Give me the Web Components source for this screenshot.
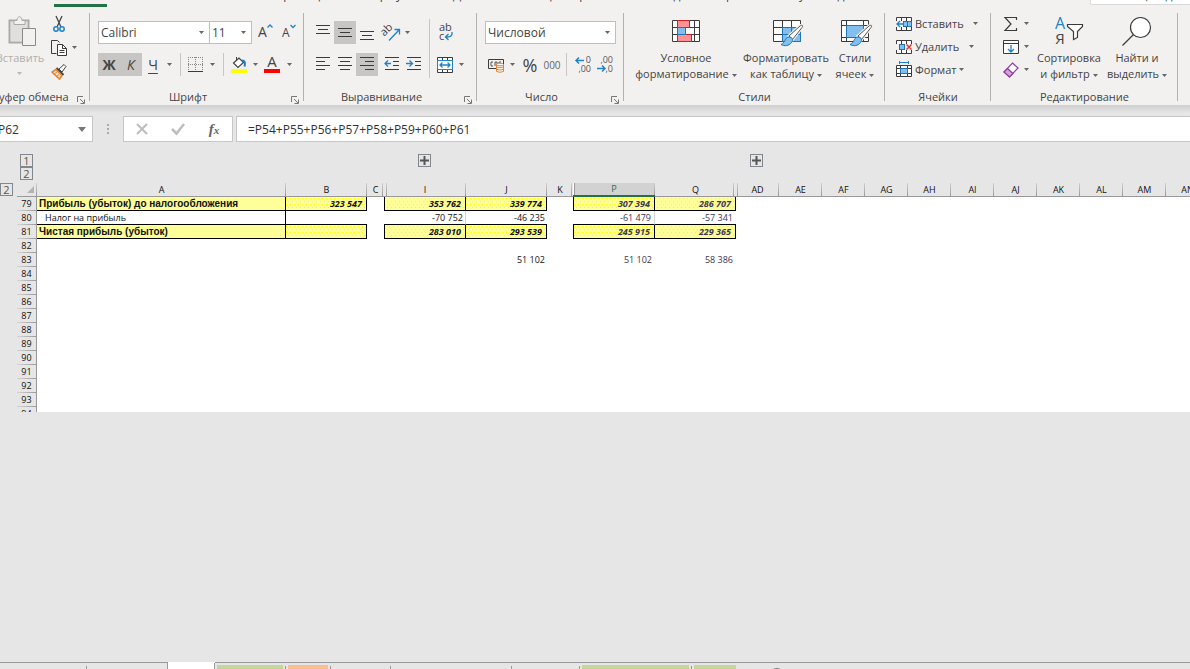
<!DOCTYPE html>
<html lang="ru">
<head>
<meta charset="utf-8">
<title>Книга</title>
<style>
html,body{margin:0;height:100%}
body{background:#e6e6e6;color:#444;font:12px/16px "Open Sans","Noto Sans",sans-serif;overflow:hidden}
</style>
</head>
<body>
<excel-app></excel-app>
<script>
const K='#3b3b3b', B='#1e83c8';
const lines=(...a)=>`<path d="${a.map(([x,y,w])=>`M${x} ${y}.5h${w}`).join('')}" stroke="${K}"/>`;
const brush=`<path d="M31 11.500c1.500-2 0-3-2-1.500L18 20l3.500 3.500z" fill="#fff" stroke="#f3f1f0" stroke-width="3"/><path d="M31 11.500c1.500-2 0-3-2-1.500L18 20l3.500 3.500z" fill="#fff" stroke="#555"/><path d="M10 28.500c4-1 3.500-7 8-7.500 3.500 0 4.500 3 2.500 5.500-2.500 3.500-7 4-10.500 2z" fill="#83beec" stroke="#1e74b8"/>`;
const ICONS={
 paste:[30,30,`<path d="M4.500 4.500h19v22h-19z" fill="none" stroke="#a9a9a9" stroke-width="2"/><path d="M6 6h16v19H6z" fill="#e1dfdd"/><path d="M9 8.500V4.500h3c0-5 5-5 5 0h3v4z" fill="#f3f1f0" stroke="#a9a9a9"/><path d="M17.500 12.500h13v17h-13z" fill="#f3f1f0" stroke="#8a8a8a"/>`],
 cut:[16,16,`<path d="M5 0l5 11M11 0L6 11" stroke="#444" stroke-width="1.300"/><circle cx="5" cy="13" r="2.200" fill="none" stroke="${B}" stroke-width="1.500"/><circle cx="11" cy="13" r="2.200" fill="none" stroke="${B}" stroke-width="1.500"/>`],
 copy:[16,16,`<path d="M5.500 13.500h-5V.5h6l2 2" fill="none" stroke="${K}"/><path d="M6.500 4.500h5l4 4v7h-9z" fill="#fff" stroke="${K}"/><path d="M11.500 4.500v4h4M8.500 10.500h5M8.500 12.500h5" fill="none" stroke="${K}"/>`],
 painter:[16,16,`<path d="M8 5l5-4.500 2 2L11 8z" fill="#fff" stroke="#444"/><path d="M5.500 4l7 7" stroke="#444" stroke-width="2"/><path d="M5 5.500L1 8l7.500 7L11 11.500z" fill="#fbe3cf" stroke="#e8812c" stroke-width="1.500"/><path d="M3 10l3-2M5.500 12.500l3-2.500" stroke="#e8812c"/>`],
 grow:[16,16,`<text x="0" y="12" font-size="14" fill="#444">A</text><path d="M9.500 2.500L12 0l2.500 2.500" fill="none" stroke="${B}" stroke-width="1.300"/>`],
 shrink:[16,16,`<text x="1" y="12" font-size="12" fill="#444">A</text><path d="M9.500 0L12 2.500 14.500 0" fill="none" stroke="${B}" stroke-width="1.300"/>`],
 borders:[16,16,`<path d="M.5 0v13M5 .5M0 .5h15M14.500 0v13M7.500 0v13M0 7.500h15" stroke="#888" stroke-dasharray="1 1" fill="none"/><path d="M0 14.500h15" stroke="${K}" stroke-width="1"/>`],
 fill:[16,16,`<path d="M8 1L2.500 6 7 10.500l5.500-5z" fill="#fff" stroke="#444" stroke-width="1.200"/><path d="M5.500 4V0" stroke="#444"/><path d="M11 3.500c3 0 3.500 2 2.500 6" fill="none" stroke="${B}" stroke-width="2"/><path d="M0 12h16v4H0z" fill="#ff0"/>`],
 fcolor:[16,16,`<text x="8" y="10" font-size="15" fill="#444" text-anchor="middle">A</text><path d="M0 12h16v4H0z" fill="#f00"/>`],
 top:[14,16,lines([0,0,14],[2,4,10],[0,8,14])],
 mid:[14,16,lines([0,3,14],[2,7,10],[0,11,14])],
 bot:[14,16,lines([0,6,14],[2,10,10],[0,14,14])],
 left:[14,16,lines([0,0,14],[0,4,9],[0,8,14],[0,12,9])],
 center:[14,16,lines([0,0,14],[2,4,10],[0,8,14],[2,12,10])],
 right:[14,16,lines([0,0,14],[5,4,9],[0,8,14],[5,12,9])],
 outdent:[16,16,lines([1,0,14],[9,4,6],[9,8,6],[1,12,14])+`<path d="M1 6.500h6M4 3.500l-3 3 3 3" fill="none" stroke="${B}" stroke-width="1.300"/>`],
 indent:[16,16,lines([1,0,14],[9,4,6],[9,8,6],[1,12,14])+`<path d="M0 6.500h6M3.500 3.500l3 3-3 3" fill="none" stroke="${B}" stroke-width="1.300"/>`],
 orient:[16,16,`<text x="-1" y="9" font-size="11" fill="#444" transform="rotate(-45 3 9)">ab</text><path d="M5 15.500L15 5M10.500 4.500H15.500V9.500" fill="none" stroke="${B}" stroke-width="1.300"/>`],
 wrap:[16,18,`<text x="2" y="7" font-size="11" fill="#444">ab</text><text x="2" y="16" font-size="11" fill="#444">c</text><path d="M15 8v2q0 3-6 3M11.500 10l-3 3 3 3" fill="none" stroke="${B}" stroke-width="1.300"/>`],
 merge:[16,16,`<path d="M.5.5h15v15H.5zM5.500.5v3M10.500.5v3M5.500 12.500v3M10.500 12.500v3" fill="#fff" stroke="${K}"/><path d="M.5 3.500h15v9H.5z" fill="#fff" stroke="${B}"/><path d="M3 8h10M5.500 5.500L3 8l2.500 2.500M10.500 5.500L13 8l-2.500 2.500" fill="none" stroke="${B}" stroke-width="1.300"/>`],
 money:[17,16,`<path d="M.5 2.500h15v9H.5z" fill="none" stroke="${K}"/><path d="M5 5H3v4h2M9 9V5H7v4M11 9V5h2" fill="none" stroke="#555"/><path d="M8.500 7.500h7v7q-3.500 1.500-7 0z" fill="#fff" stroke="#e8812c"/><ellipse cx="12" cy="7.500" rx="3.500" ry="1.300" fill="#fff" stroke="#e8812c"/><path d="M8.500 10q3.500 1.500 7 0M8.500 12.300q3.500 1.500 7 0" fill="none" stroke="#e8812c"/>`],
 decinc:[17,18,`<text x="16" y="7" font-size="9" text-anchor="end" fill="#555">0</text><text x="16" y="16" font-size="9" text-anchor="end" fill="#555">,00</text><path d="M1 4.500h8M4 1.500l-3 3 3 3" fill="none" stroke="${B}" stroke-width="1.500"/>`],
 decdec:[17,18,`<text x="16" y="7" font-size="9" text-anchor="end" fill="#555">,00</text><text x="16" y="16" font-size="9" text-anchor="end" fill="#555">,0</text><path d="M0 12.500h8M5 9.500l3 3-3 3" fill="none" stroke="${B}" stroke-width="1.500"/>`],
 cond:[30,30,`<path d="M1.500 4.500h27v21h-27zM1.500 11.500h27M1.500 18.500h27M6.500 4.500v21M14.500 4.500v21M23.500 4.500v21" fill="#fff" stroke="${K}"/><path d="M6.500 4.500h12v7h-12zM6.500 18.500h14v7h-14z" fill="#ff9298" stroke="#d01f1f"/><path d="M6.500 11.500h8v7h-8z" fill="#83beec" stroke="#1e74b8"/>`],
 table:[30,30,`<path d="M2.500 4.500h27v21h-27z" fill="#fff" stroke="${K}"/><path d="M11.500 11.500h18v14h-18z" fill="#83beec"/><path d="M2.500 11.500h9M2.500 18.500h9M11.500 4.500v7M20.500 4.500v7" stroke="${K}"/><path d="M11.500 11.500h18v14h-18zM11.500 18.500h18M20.500 11.500v14" stroke="#1e74b8" fill="none"/>`+brush],
 styles:[30,30,`<path d="M1.500 4.500h27v21h-27zM1.500 9.500h27M1.500 21.500h27M6.500 4.500v21M23.500 4.500v21" fill="#fff" stroke="${K}"/><path d="M6.500 9.500h17v12h-17z" fill="#83beec" stroke="#1e74b8"/>`+brush],
 insert:[16,16,`<path d="M.5 1.500h15v13H.5zM.5 5.500h15M.5 10.500h15M5.500 1.500v13M10.500 1.500v13" fill="#fff" stroke="${K}"/><path d="M0 5h7v6H0z" fill="#f3f1f0"/><path d="M7.500 5.500h8v5h-8zM11.500 5.500v5" fill="#83beec" stroke="#1e74b8"/><path d="M1 8h7M4 5L1 8l3 3" fill="none" stroke="${B}" stroke-width="1.300"/>`],
 del:[16,16,`<path d="M.5 1.500h15v13H.5zM.5 5.500h15M.5 10.500h15M5.500 1.500v13M10.500 1.500v13" fill="#fff" stroke="${K}"/><path d="M0 5h3v6H0zM9 5h7v6H9z" fill="#f3f1f0"/><path d="M3.500 5.500h5v5h-5z" fill="#83beec" stroke="#1e74b8"/><path d="M10.500 5.500l5 5M15.500 5.500l-5 5" stroke="#e8383d" stroke-width="1.500"/>`],
 format:[16,16,`<path d="M.5 3.500h15v11H.5zM.5 6.500h15M.5 11.500h15M4.500 3.500v11M11.500 3.500v11" fill="#fff" stroke="${K}"/><path d="M4.500 6.500h7v5h-7z" fill="#83beec" stroke="#1e74b8"/><path d="M3.500-1v3M12.500-1v3M3.500.5h9" stroke="${B}"/>`],
 sum:[16,16,`<path d="M13.500 4V1.500H2L8 8l-6 6.500h11.500V12" fill="none" stroke="${K}" stroke-width="1.200"/>`],
 down:[16,16,`<path d="M.5 1.500h15v13H.5zM.5 4.500h15" fill="#fff" stroke="${K}"/><path d="M8 6v7M5 10l3 3 3-3" fill="none" stroke="${B}" stroke-width="1.300"/>`],
 eraser:[16,16,`<path d="M9.500 1L15 6 6.500 15 1 10z" fill="#fff" stroke="#8b3fa0" stroke-width="1.200"/><path d="M4.500 6.500L10 11.500 6.500 15 1 10z" fill="#d8a0df" stroke="#8b3fa0" stroke-width="1.200"/>`],
 sort:[30,30,`<text x="6" y="13" font-size="16" text-anchor="middle" fill="${B}">A</text><text x="6" y="28" font-size="15" text-anchor="middle" fill="#444">Я</text><path d="M13.500 8.500h15v2l-5 5v6l-4 2v-8l-6-5z" fill="#fff" stroke="${K}" stroke-width="1.200"/>`],
 find:[30,30,`<circle cx="18.500" cy="11.500" r="10" fill="#fff" stroke="${K}" stroke-width="1.200"/><path d="M11.500 18.500L.5 29.500" stroke="${K}" stroke-width="1.300"/>`],
 launch:[8,8,`<path d="M.5 6V.5H6M3 3l4 4M7.500 3.500v4h-4" fill="none" stroke="#777"/>`],
 caret:[5,3,`<path d="M0 0h5L2.500 3z" fill="#666"/>`],
 cancel:[12,12,`<path d="M1 1l10 10M11 1L1 11" stroke="#bdbdbd" stroke-width="2"/>`],
 ok:[14,12,`<path d="M1 6l4.500 4.500L13 1" fill="none" stroke="#bdbdbd" stroke-width="2.500"/>`]
};
const svg=n=>{const[w,h,b]=ICONS[n];return `<svg width="${w}" height="${h}" viewBox="0 0 ${w} ${h}" fill="none" aria-hidden="true">${b}</svg>`};
const define=(tag,render)=>customElements.define(tag,class extends HTMLElement{
  constructor(){super();this.attachShadow({mode:'open'})}
  connectedCallback(){this.shadowRoot.innerHTML=render(this)}
});
const BTN='button{font:inherit;color:inherit;background:none;border:0;padding:0;margin:0}svg{display:block;flex:none;overflow:visible}';

define('rb-group',e=>`<style>${BTN}
:host{display:flex;flex-direction:column;flex:none;box-sizing:border-box;background:linear-gradient(#b4b2b1,#b4b2b1) right 1px/1px 88px no-repeat}
.body{display:flex;height:77px}
.foot{display:flex;height:16px;line-height:16px}
.foot span{flex:1;text-align:center;white-space:nowrap}
.foot button{width:18px;padding:5px 0 0 5px}
</style><div class="body"><slot></slot></div><div class="foot"><span>${e.getAttribute('label')}</span>${e.hasAttribute('launcher')?`<button title="Параметры">${svg('launch')}</button>`:''}</div>`);

define('rb-rows',()=>`<style>:host{display:flex;flex-direction:column;gap:9px;padding-top:9px}:host([three]){gap:0;padding-top:0}</style><slot></slot>`);
define('rb-row',()=>`<style>:host{display:flex;height:23px;align-items:stretch}</style><slot></slot>`);
define('rb-sep',()=>`<style>:host{display:flex;width:11px;justify-content:center}:host([tall]){width:9px;padding:7px 0 0;height:59px}i{width:1px;background:#c8c6c4}</style><i></i>`);

define('rb-tool',e=>`<style>${BTN}
:host{display:flex}
button{display:flex;align-items:center;justify-content:center;height:23px;box-sizing:border-box}
.main{width:${e.getAttribute('w')||22}px}
.wide{width:auto;gap:3px}
.on{background:#c8c6c4}
.drop{width:${e.getAttribute('caret')||0}px}
</style><button class="main ${e.hasAttribute('on')?'on':''} ${e.textContent.trim()&&e.hasAttribute('icon')?'wide':''}">${e.hasAttribute('icon')?svg(e.getAttribute('icon')):''}<slot></slot></button>${e.hasAttribute('caret')?`<button class="drop">${svg('caret')}</button>`:''}`);

define('rb-big',e=>`<style>${BTN}
:host{display:block;flex:none;width:${e.getAttribute('w')}px}
button{display:flex;flex-direction:column;align-items:center;width:100%;padding-top:4px;white-space:nowrap}
:host([muted]){color:#b1afad}
span{margin-top:4px;line-height:16px;text-align:center}
.c{display:inline-block;vertical-align:middle;margin-left:3px}
:host([muted]) .c{display:flex;height:14px;align-items:center;justify-content:center;margin:0;opacity:.4}
</style><button>${svg(e.getAttribute('icon'))}<span><slot></slot><i class="c">${svg('caret')}</i></span></button>`);

define('rb-combo',e=>`<style>
:host{display:block;font-size:12px}
select{display:block;width:${e.getAttribute('w')}px;height:23px;box-sizing:border-box;border:1px solid #c1bfbd;border-radius:0;background:#fff;color:#444;font:inherit;padding:0 2px;appearance:none}
label{display:flex;align-items:center}
svg{margin-left:-11px;margin-right:6px;pointer-events:none}
</style><label aria-label="${e.getAttribute('name')}"><select><option>${e.getAttribute('value')}</option></select>${svg('caret')}</label>`);

define('ribbon-tabs',()=>`<style>
:host{display:flex;position:relative;height:8px;overflow:hidden;background:#f3f1f0}
a{color:#444;text-decoration:none;white-space:nowrap;height:16px;line-height:16px;margin-top:-13px;flex:none}
.home{width:53px;margin-left:54px;height:20px;border-bottom:3px solid #217346;margin-top:-16px;line-height:20px;color:#217346}
.share{position:absolute;right:0;top:0;width:70px;margin:0;height:4px;background:#fff;color:#217346;border:1px solid #dcdad8;border-top:0;border-right:0;border-radius:0 0 0 2px;padding-left:29px;box-sizing:content-box}
.share span{display:block;margin-top:-13px}
</style><a class="home" href="#">Главная</a>
<a href="#" style="width:88px;margin-left:20px">Вставка</a><a href="#" style="width:148px">Разметка страницы</a><a href="#" style="width:90px">Формулы</a><a href="#" style="width:77px">Данные</a><a href="#" style="width:128px">Рецензирование</a><a href="#" style="width:53px">Вид</a><a href="#" style="width:56px">Справка</a><a href="#">Что нужно сделать?</a>
<a class="share" href="#"><span>Общий доступ</span></a>`);

define('excel-ribbon',()=>`<style>
:host{display:flex;background:#f3f1f0;padding-top:4px;height:93px;font-size:11px}
.clip{margin-left:-11px;width:101px}
.clip rb-rows{display:block}
.clip rb-row{height:24px}
.font{width:214px}.align{width:173px}.num{width:147px}.sty{width:261px}.cells{width:106px}.edit{width:187px}
.p{margin-left:8px}
.x{margin-left:3px}
.second{margin-left:-1px}
b,em,u{font-size:14px}
u{text-underline-offset:3px}
.k{font-size:10px;color:#666}.pc{font-size:18px}
.cells .p{margin-left:11px}
.edit .p{margin-left:9px}
</style>
<rb-group class="clip" label="Буфер обмена" launcher>
 <rb-big icon="paste" w="62" muted>Вставить</rb-big>
 <rb-rows three><rb-row><rb-tool icon="cut" w="16"></rb-tool></rb-row><rb-row><rb-tool icon="copy" w="16" caret="14"></rb-tool></rb-row><rb-row><rb-tool icon="painter" w="16"></rb-tool></rb-row></rb-rows>
</rb-group>
<rb-group class="font" label="Шрифт" launcher>
 <rb-rows class="p">
  <rb-row><rb-combo name="Шрифт" value="Calibri" w="112"></rb-combo><rb-combo class="second" name="Размер" value="11" w="43"></rb-combo><rb-tool icon="grow" w="28"></rb-tool><rb-tool icon="shrink" w="18"></rb-tool></rb-row>
  <rb-row><rb-tool on><b>Ж</b></rb-tool><rb-tool on><em>К</em></rb-tool><rb-tool caret="11"><u>Ч</u></rb-tool><rb-sep></rb-sep><rb-tool icon="borders" w="20" caret="12"></rb-tool><rb-sep></rb-sep><rb-tool icon="fill" w="20" caret="12"></rb-tool><rb-tool icon="fcolor" caret="12"></rb-tool></rb-row>
 </rb-rows>
</rb-group>
<rb-group class="align" label="Выравнивание" launcher>
 <rb-rows class="p">
  <rb-row><rb-tool icon="top"></rb-tool><rb-tool icon="mid" on></rb-tool><rb-tool icon="bot"></rb-tool><rb-tool class="x" icon="orient" caret="8"></rb-tool></rb-row>
  <rb-row><rb-tool icon="left"></rb-tool><rb-tool icon="center"></rb-tool><rb-tool icon="right" on></rb-tool><rb-tool class="x" icon="outdent"></rb-tool><rb-tool icon="indent"></rb-tool></rb-row>
 </rb-rows>
 <rb-sep tall></rb-sep>
 <rb-rows><rb-row><rb-tool icon="wrap"></rb-tool></rb-row><rb-row><rb-tool icon="merge" caret="10"></rb-tool></rb-row></rb-rows>
</rb-group>
<rb-group class="num" label="Число" launcher>
 <rb-rows class="p">
  <rb-row><rb-combo name="Формат" value="Числовой" w="131"></rb-combo></rb-row>
  <rb-row><rb-tool icon="money" caret="10"></rb-tool><rb-tool w="26"><span class="pc">%</span></rb-tool><rb-tool w="18"><span class="k">000</span></rb-tool><rb-sep></rb-sep><rb-tool icon="decinc"></rb-tool><rb-tool icon="decdec"></rb-tool></rb-row>
 </rb-rows>
</rb-group>
<rb-group class="sty" label="Стили">
 <rb-big class="p" icon="cond" w="108">Условное<br>форматирование</rb-big><rb-big icon="table" w="92">Форматировать<br>как таблицу</rb-big><rb-big icon="styles" w="46">Стили<br>ячеек</rb-big>
</rb-group>
<rb-group class="cells" label="Ячейки">
 <rb-rows three class="p"><rb-row><rb-tool icon="insert" caret="24">Вставить</rb-tool></rb-row><rb-row><rb-tool icon="del" caret="24">Удалить</rb-tool></rb-row><rb-row><rb-tool icon="format" caret="10">Формат</rb-tool></rb-row></rb-rows>
</rb-group>
<rb-group class="edit" label="Редактирование">
 <rb-rows three class="p"><rb-row><rb-tool icon="sum" caret="9"></rb-tool></rb-row><rb-row><rb-tool icon="down" caret="9"></rb-tool></rb-row><rb-row><rb-tool icon="eraser" caret="9"></rb-tool></rb-row></rb-rows>
 <rb-big class="x" icon="sort" w="70">Сортировка<br>и фильтр</rb-big><rb-big icon="find" w="66">Найти и<br>выделить</rb-big>
</rb-group>`);

define('formula-bar',()=>`<style>${BTN}
:host{display:flex;padding-top:11px;height:26px;background:linear-gradient(#cfcfcf,#e6e6e6 8px)}
.box{display:flex;align-items:center;height:26px;box-sizing:border-box;border:1px solid #c6c6c6;background:#fff}
input{border:0;outline:0;padding:1px 0 0;margin:0;background:none;font:inherit;color:#333;min-width:0;width:100%}
.name{width:96px;margin-left:-3px;padding-right:6px}
.dots{width:30px;display:flex;flex-direction:column;align-items:center;justify-content:center;gap:2px}
.dots i{width:2px;height:2px;background:#aaa}
.acts{width:110px;margin-right:3px;justify-content:space-around}
.acts button{width:36px;display:flex;justify-content:center}
.fx{font:italic bold 15px/16px "Liberation Serif",serif;color:#666}.fx small{font-size:11px}
.f{flex:1;padding-left:11px;border-right:0}
</style>
<div class="box name"><input aria-label="Имя" value="P62"><button><svg width="8" height="5"><path d="M0 0h8L4 5z" fill="#777"/></svg></button></div>
<div class="dots"><i></i><i></i><i></i></div>
<div class="box acts"><button>${svg('cancel')}</button><button>${svg('ok')}</button><button><span class="fx">f<small>x</small></span></button></div>
<div class="box f"><input aria-label="Формула" value="=P54+P55+P56+P57+P58+P59+P60+P61"></div>`);

define('outline-button',()=>`<style>${BTN}:host{display:block}button{display:block;width:13px;height:13px;box-sizing:border-box;border:1px solid #81868f;font-size:11px;line-height:11px;color:#555;text-align:center}</style><button><slot></slot></button>`);
define('outline-bar',()=>`<style>:host{display:flex;padding:12px 0 0 20px;height:29px}div{width:13px}.a{margin-left:385px}.b{margin-left:319px}svg{display:block;margin:1px}</style>
<div><outline-button>1</outline-button><outline-button>2</outline-button></div>
<outline-button class="a"><svg width="9" height="9"><path d="M0 4.5h9M4.5 0v9" stroke="#555" stroke-width="2"/></svg></outline-button>
<outline-button class="b"><svg width="9" height="9"><path d="M0 4.5h9M4.5 0v9" stroke="#555" stroke-width="2"/></svg></outline-button>`);

const COLS=[['A',249],['B',81],['C',17],['I',82],['J',81],['K',26],['P',82],['Q',81],['AD',43],...['AE','AF','AG','AH','AI','AJ','AK','AL','AM','AN'].map(n=>[n,43])];
const DATA={
 79:{A:'Прибыль (убыток) до налогообложения',B:'323 547',I:'353 762',J:'339 774',P:'307 394',Q:'286 707'},
 80:{A:'Налог на прибыль',I:'-70 752',J:'-46 235',P:'-61 479',Q:'-57 341'},
 81:{A:'Чистая прибыль (убыток)',B:'',I:'283 010',J:'293 539',P:'245 915',Q:'229 365'},
 83:{J:'51 102',P:'51 102',Q:'58 386'}};
define('excel-sheet',()=>{
 const rows=[];
 for(let r=79;r<=94;r++){
  const d=DATA[r]||{};
  rows.push(`<tr class="r${r} ${r==79||r==81?'total':''}"><td class="gut"></td><th scope="row">${r}</th>${COLS.map(([c])=>`<td class="${c}">${d[c]||''}</td>`).join('')}</tr>`);
 }
 return `<style>
:host{display:block;height:229px;overflow:hidden;font-size:9px}
.wrap{background:linear-gradient(90deg,#e6e6e6 36px,#fff 36px)}
table{table-layout:fixed;border-collapse:separate;border-spacing:0;width:${COLS.reduce((s,c)=>s+c[1],37)}px}
td,th{box-sizing:border-box;height:14px;padding:0;line-height:12px;font-weight:400;white-space:nowrap;overflow:hidden}
thead th,thead td{background:#e6e6e6;border-bottom:1px solid #999;color:#111}
thead th{--l:linear-gradient(#d0d0d0,#999);background:var(--l) right/1px 100% no-repeat #e6e6e6}
thead .C,thead .K{background:var(--l) 15px 0/1px 100% no-repeat #e6e6e6}
thead .K{background-position:24px 0}
thead .I,thead .AD{background:var(--l) right/1px 100% no-repeat,var(--l) 2px 0/1px 100% no-repeat #e6e6e6}
thead .AD{background-position:right,1px 0}
thead .P{background:var(--l) right/1px 100% no-repeat,linear-gradient(90deg,#fff 1px,#999 1px,#999 2px,#d2d2d2 2px);border-bottom:2px solid #217346}
thead .Q{background-position:78px 0}
.gut{background:#e6e6e6;border:0!important}
thead .gut{vertical-align:top}
tbody th{background:linear-gradient(90deg,#d6d6d6,#999) bottom/100% 1px no-repeat #e6e6e6;border-right:1px solid #999;color:#111}
tbody td{background:#fff;color:#111;text-align:right;padding-right:2px}
tbody .A{text-align:left;padding-left:2px}
.r80 .A{padding-left:8px}
tbody :is(.P,.Q){color:#40364f;padding-right:3px}
thead .P{color:#217346}
.total :is(.A,.B,.I,.J,.P,.Q){border-bottom:1px solid #000;border-right:1px solid #000;background:#ff9;font-weight:700}
.r80 :is(.A,.B,.I,.J,.P,.Q){border-bottom:1px solid #000}
.r80 .A{border-right:1px solid #000}
.r80 :is(.I,.P){border-right:1px solid #d4d4d4}
.total .A{font:700 10px/13px "Liberation Sans",Arial,sans-serif}
.total :is(.I,.P){border-left:1px solid #000}
.total :is(.B,.I,.J,.P,.Q){font-style:italic;padding-right:4px;background:
 linear-gradient(90deg,#ff9 3px,transparent 3px) 0 0/4px 8px,
 linear-gradient(#ff0 1px,transparent 1px) 0 1px/4px 4px #ff9;
 background:conic-gradient(at 1px 1px,transparent 75%,#ff0 0) 0 1px/4px 6px,conic-gradient(at 1px 1px,transparent 75%,#ff0 0) 2px 4px/4px 6px #ff9}
thead th svg{display:block;margin:0 0 0 10px}
</style><div class="wrap"><table><colgroup><col style="width:17px"><col style="width:20px">${COLS.map(c=>`<col style="width:${c[1]}px">`).join('')}</colgroup>
<thead><tr><td class="gut"><outline-button>2</outline-button></td><th><svg width="7" height="7"><path d="M7 0v7H0z" fill="#b4b4b4"/></svg></th>${COLS.map(([c])=>`<th scope="col" class="${c}">${c}</th>`).join('')}</tr></thead>
<tbody>${rows.join('')}</tbody></table></div>`});

define('sheet-tabs',()=>`<style>
:host{display:flex;height:7px;margin-top:auto;overflow:hidden}
div{box-sizing:border-box;flex:none;border-top:1px solid #999;display:flex}
div::before{content:"";flex:1;margin:2px 2px 0;background:var(--c,none)}
div::after{content:"";width:1px;margin-top:3px;background:#999}
.pre::after,.on::after{margin-top:0}
.on{background:#fff;border-top-color:#fff}
.end::after{display:none}
.rest{flex:1}.rest::before,.rest::after{display:none}
.rest i{width:16px;height:16px;box-sizing:border-box;border:1px solid #777;border-radius:8px;margin:5px 0 0 31px}
.g{--c:#c4d79b}.o{--c:#fabf8f}
</style><div style="width:87px"></div><div class="pre" style="width:81px"></div><div class="on" style="width:47px"></div><div class="g" style="width:71px"></div><div class="o" style="width:45px"></div><div style="width:60px"></div><div style="width:121px"></div><div style="width:68px"></div><div class="g" style="width:112px"></div><div class="g end" style="width:46px"></div><div class="rest"><i></i></div>`);

define('excel-app',()=>`<style>:host{display:flex;flex-direction:column;min-height:100vh}</style>
<ribbon-tabs></ribbon-tabs><excel-ribbon></excel-ribbon><formula-bar></formula-bar><outline-bar></outline-bar><excel-sheet></excel-sheet><sheet-tabs></sheet-tabs>`);
</script>
</body>
</html>
